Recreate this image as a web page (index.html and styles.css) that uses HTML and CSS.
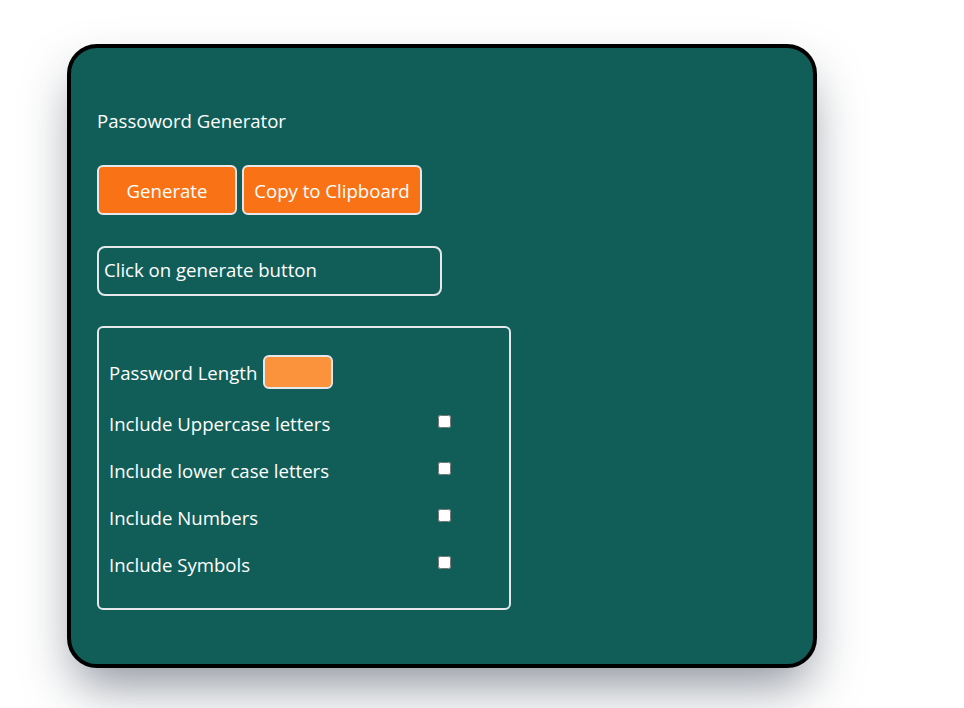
FILE: index.html
```html
<!DOCTYPE html>
<html>
<head>
<meta charset="utf-8">
<link rel="stylesheet" href="styles.css">
</head>
<body>
<div class="card">
  <div class="title">Passoword Generator</div>
  <div class="buttons">
    <button class="btn btn-gen">Generate</button>
    <button class="btn btn-copy">Copy to Clipboard</button>
  </div>
  <div class="output">Click on generate button</div>
  <div class="options">
    <div class="row row-len">
      <span class="label-inline">Password Length</span>
      <input class="len-input" type="text">
    </div>
    <div class="row"><span class="label">Include Uppercase letters</span><input class="chk" type="checkbox"></div>
    <div class="row"><span class="label">Include lower case letters</span><input class="chk" type="checkbox"></div>
    <div class="row"><span class="label">Include Numbers</span><input class="chk" type="checkbox"></div>
    <div class="row"><span class="label">Include Symbols</span><input class="chk" type="checkbox"></div>
  </div>
</div>
</body>
</html>
```

FILE: styles.css
```css
html, body {
  margin: 0;
  padding: 0;
  background: #ffffff;
}
body {
  box-sizing: border-box;
  min-height: 708px;
  padding-top: 44px;
  font-family: "Open Sans", "Noto Sans", sans-serif;
  font-size: 18.6px;
  color: #ffffff;
}
.card {
  box-sizing: border-box;
  width: 750px;
  height: 624px;
  margin: 0 0 0 67px;
  border: 4px solid #000000;
  border-radius: 30px;
  background: #115e59;
  padding: 61px 26px 0 26px;
  box-shadow: 0 25px 50px -8px rgba(30, 41, 59, 0.5);
}
.title {
  line-height: 24px;
  height: 24px;
}
.buttons {
  display: flex;
  gap: 5px;
  margin-top: 32px;
}
.btn {
  box-sizing: border-box;
  height: 50px;
  border: 2px solid #e5e7eb;
  border-radius: 6px;
  background: #f97316;
  color: #ffffff;
  font-family: inherit;
  font-size: 18.6px;
  padding: 0;
}
.btn-gen { width: 140px; }
.btn-copy { width: 180px; white-space: nowrap; }
.output {
  box-sizing: border-box;
  width: 345px;
  height: 50px;
  margin-top: 31px;
  border: 2px solid #e5e7eb;
  border-radius: 8px;
  padding: 0 5px 3px 5px;
  display: flex;
  align-items: center;
}
.options {
  box-sizing: border-box;
  width: 414px;
  margin-top: 30px;
  border: 2px solid #e5e7eb;
  border-radius: 6px;
  padding: 27px 10px 32px 10px;
  display: flex;
  flex-direction: column;
  gap: 23px;
}
.row {
  display: flex;
  align-items: center;
  height: 24px;
}
.row-len {
  height: 34px;
  margin-bottom: -1px;
}
.label-inline {
  margin-right: 6px;
}
.len-input {
  box-sizing: border-box;
  width: 70px;
  height: 34px;
  border: 2px solid #e5e7eb;
  border-radius: 6px;
  background: #fb923c;
  margin: 0;
  padding: 0;
}
.label {
  width: 326px;
}
.chk {
  width: 13px;
  height: 13px;
  margin: 0 0 3px 3px;
}
```
